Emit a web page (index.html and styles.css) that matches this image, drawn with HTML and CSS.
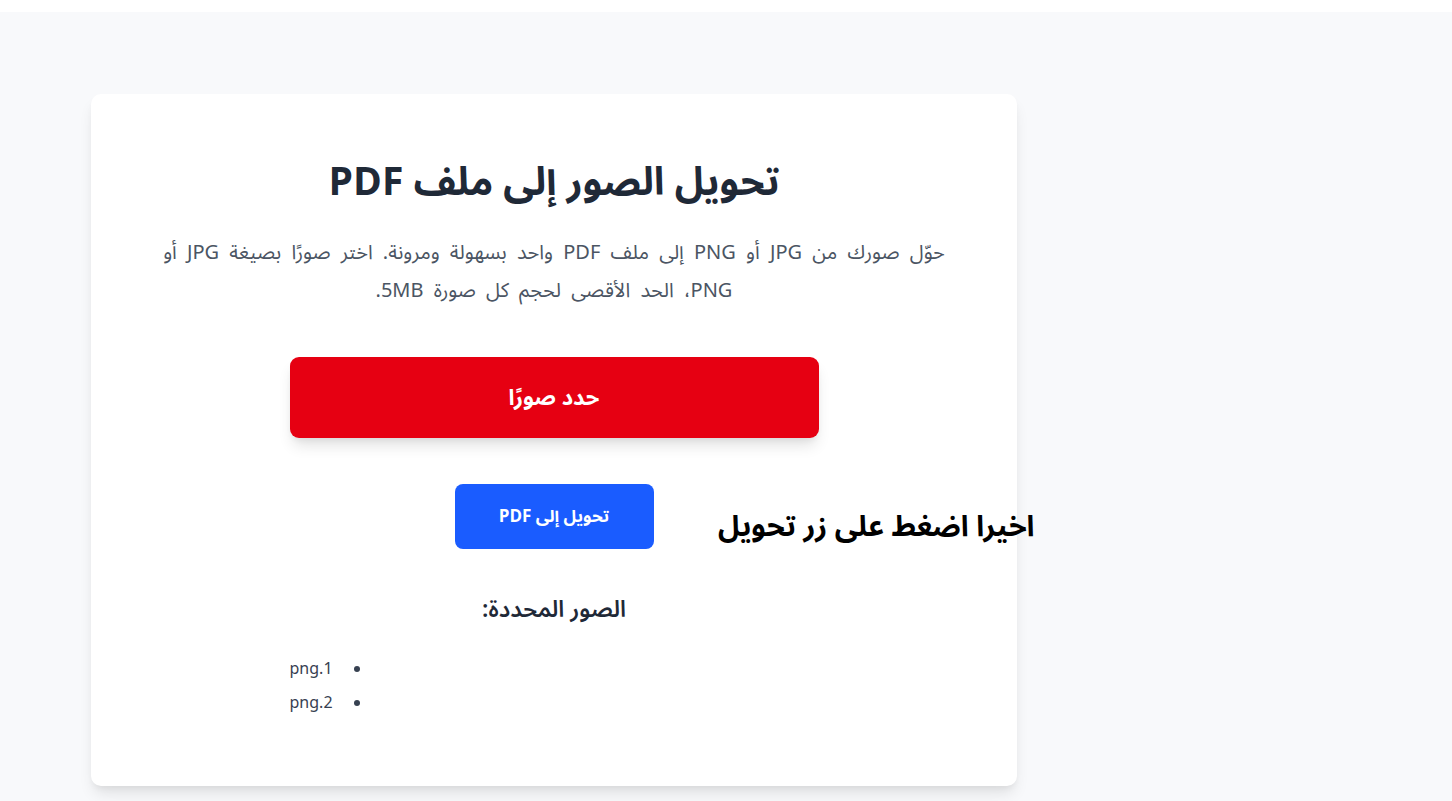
FILE: index.html
```html
<!DOCTYPE html>
<html lang="ar" dir="rtl">
<head>
<meta charset="utf-8">
<title>تحويل الصور إلى ملف PDF</title>
<link rel="stylesheet" href="styles.css">
</head>
<body>
<div class="topbar"></div>
<main class="page">
  <section class="card">
    <h1 class="title">تحويل الصور إلى ملف PDF</h1>
    <p class="lead">حوّل صورك من JPG أو PNG إلى ملف PDF واحد بسهولة ومرونة. اختر صورًا بصيغة JPG أو PNG، الحد الأقصى لحجم كل صورة 5MB.</p>
    <button class="btn-select" type="button">حدد صورًا</button>
    <button class="btn-convert" type="button">تحويل إلى PDF</button>
    <h2 class="subtitle">الصور المحددة:</h2>
    <ul class="files">
      <li class="file"><span class="dot"></span><span class="name">1.png</span></li>
      <li class="file"><span class="dot"></span><span class="name">2.png</span></li>
    </ul>
    <div class="note">اخيرا اضغط على زر تحويل</div>
  </section>
</main>
</body>
</html>
```
FILE: styles.css
```css
* { box-sizing: border-box; }
html, body { margin: 0; padding: 0; }
body {
  background: #f8f9fb;
  font-family: "Noto Sans Arabic", "Noto Sans", "DejaVu Sans", sans-serif;
  color: #1f2937;
  height: 801px;
  overflow: hidden;
}
.topbar { height: 12px; background: #ffffff; }
.page {
  padding: 82px 435px 0 91px;
}
.card {
  position: relative;
  width: 926px;
  height: 692px;
  background: #ffffff;
  border-radius: 10px;
  box-shadow: 0 10px 15px -3px rgba(0,0,0,0.10), 0 4px 6px -2px rgba(0,0,0,0.05);
  padding: 66px 40px 0;
  display: flex;
  flex-direction: column;
  align-items: center;
}
.title {
  margin: 0;
  font-size: 39px;
  line-height: 46px;
  font-weight: 700;
  color: #1f2937;
  text-align: center;
}
.lead {
  margin: 28px 0 0;
  max-width: 800px;
  font-size: 20px;
  line-height: 38px;
  word-spacing: 5px;
  color: #4b5563;
  text-align: center;
}
.btn-select {
  margin-top: 47px;
  width: 529px;
  height: 81px;
  border: 0;
  border-radius: 9px;
  background: #e60012;
  color: #ffffff;
  font-family: inherit;
  font-size: 22px;
  font-weight: 700;
  box-shadow: 0 10px 15px -3px rgba(0,0,0,0.12), 0 4px 6px -2px rgba(0,0,0,0.06);
}
.btn-convert {
  margin-top: 46px;
  width: 199px;
  height: 65px;
  border: 0;
  border-radius: 8px;
  background: #1a5cff;
  color: #ffffff;
  font-family: inherit;
  font-size: 17px;
  font-weight: 700;
}
.subtitle {
  margin: 46px 0 0;
  font-size: 23px;
  line-height: 30px;
  font-weight: 600;
  color: #1f2937;
}
.files {
  list-style: none;
  margin: 27px 0 0;
  padding: 0;
  width: 529px;
}
.file {
  display: flex;
  justify-content: flex-end;
  align-items: center;
  gap: 21px;
  height: 34px;
  font-size: 16px;
  color: #374151;
}
.dot {
  width: 6px;
  height: 6px;
  border-radius: 50%;
  background: #374151;
}
.note {
  position: absolute;
  left: 627px;
  top: 413px;
  white-space: nowrap;
  font-size: 29px;
  line-height: 40px;
  font-weight: 700;
  color: #000000;
}
```
